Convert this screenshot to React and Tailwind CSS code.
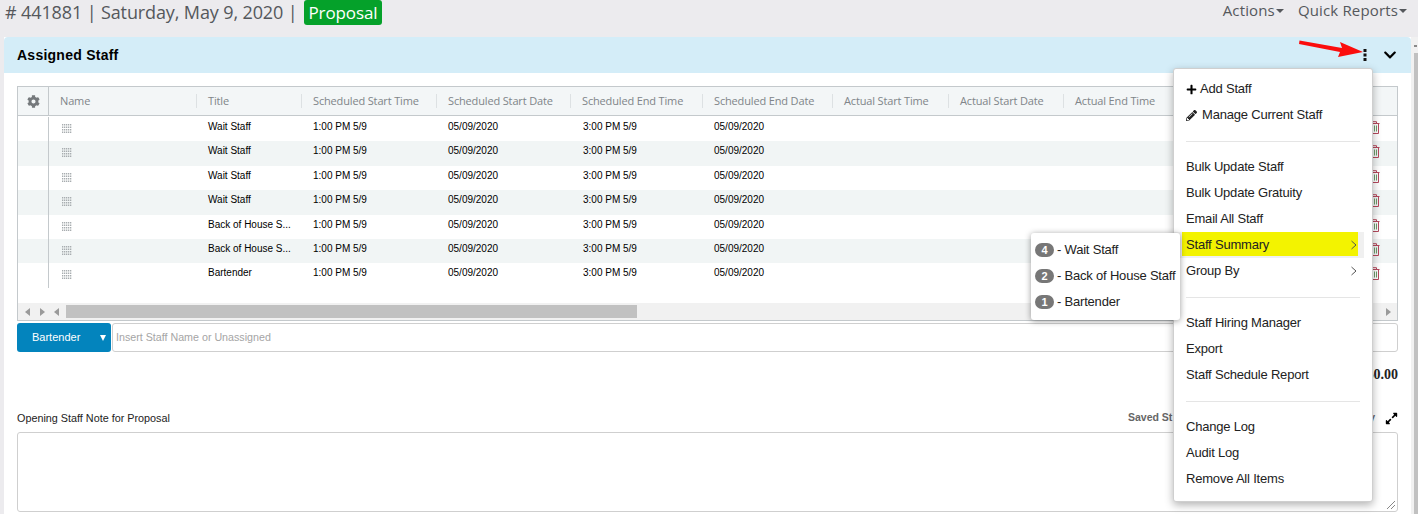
import React from "react";
import { FaCog, FaPlus, FaPencilAlt, FaExpandAlt, FaChevronDown } from "react-icons/fa";

const arial = "font-['Liberation_Sans',Arial,sans-serif]";
const open = "font-['Open_Sans',sans-serif]";

const columns = [
  ["Name", "w-[148px]"],
  ["Title", "w-[105px]"],
  ["Scheduled Start Time", "w-[135px]"],
  ["Scheduled Start Date", "w-[134px]"],
  ["Scheduled End Time", "w-[132px]"],
  ["Scheduled End Date", "w-[130px]"],
  ["Actual Start Time", "w-[116px]"],
  ["Actual Start Date", "w-[115px]"],
  ["Actual End Time", "w-[100px]"],
];

const rows = [
  "Wait Staff", "Wait Staff", "Wait Staff", "Wait Staff",
  "Back of House S...", "Back of House S...", "Bartender",
];

function Grip() {
  const dots = [];
  for (let y = 0; y < 4; y++) for (let x = 0; x < 5; x++) dots.push(<rect key={`${x}-${y}`} x={x * 2} y={y * 2.5} width="1.3" height="1.5" />);
  return <svg width="10" height="9" viewBox="0 0 10 9" fill="#a8adb0">{dots}</svg>;
}

function Trash() {
  return (
    <svg width="11" height="13" viewBox="0 0 11 13" fill="none" stroke="#b5485c" strokeWidth="1">
      <path d="M0.5 2.5H10.5M3.5 2.5V0.7H7.5V2.5" />
      <path d="M1.5 2.5V12.5H9.5V2.5" />
      <path d="M3.5 4.5V10.5M5.5 4.5V10.5M7.5 4.5V10.5" stroke="#6f9a6a" />
    </svg>
  );
}

function Row({ title, index }) {
  const striped = index % 2 === 1;
  return (
    <div className={`flex h-[24.4px] text-[10px] text-black ${arial} ${striped ? "bg-[#f1f5f5]" : "bg-white"}`}>
      <div className="w-[31px] shrink-0 border-r border-[#c4c9cc]" />
      <div className="w-[148px] shrink-0 pl-[13px] pt-[7px]"><Grip /></div>
      <div className="w-[105px] shrink-0 pl-[11px] pt-[2px]">{title}</div>
      <div className="w-[135px] shrink-0 pl-[11px] pt-[2px]">1:00 PM 5/9</div>
      <div className="w-[134px] shrink-0 pl-[11px] pt-[2px]">05/09/2020</div>
      <div className="w-[132px] shrink-0 pl-[12px] pt-[2px]">3:00 PM 5/9</div>
      <div className="w-[130px] shrink-0 pl-[11px] pt-[2px]">05/09/2020</div>
      <div className="flex flex-1 justify-end pr-[17px] pt-[4px]"><Trash /></div>
    </div>
  );
}

function Arrow({ dir, className = "" }) {
  const d = dir === "left" ? "M6 0V8L1 4Z" : "M1 0V8L6 4Z";
  return <svg width="7" height="8" viewBox="0 0 7 8" fill="#9a9a9a" className={className}><path d={d} /></svg>;
}

function MenuItem({ children, highlight, chevron }) {
  return (
    <div className={`relative mr-[8px] flex h-[26px] items-center pl-[12px] text-[13px] tracking-[-0.2px] text-[#222] ${highlight ? "bg-[#f0f0f0]" : ""}`}>
      {highlight && <div className="absolute bottom-[2px] left-[8px] top-0 w-[176px] bg-[#f3f300]" />}
      <span className="relative flex items-center">{children}</span>
      {chevron && (
        <svg width="6" height="10" viewBox="0 0 6 10" fill="none" stroke="#555" strokeWidth="1" className="absolute right-[7px] top-[8px]"><path d="M0.5 1L5 5L0.5 9" /></svg>
      )}
    </div>
  );
}

function Divider() {
  return <div className="mx-[12px] mb-[12px] mt-[13px] h-px bg-[#e5e5e5]" />;
}

function Badge({ n, label }) {
  return (
    <div className="flex h-[26px] items-center pl-[4px] text-[13px] tracking-[-0.2px] text-[#222]">
      <span className="mr-[3px] flex h-[14px] w-[19px] shrink-0 items-center justify-center rounded-full bg-[#777] text-[11px] font-bold tracking-normal text-white">{n}</span>
      <span className="whitespace-nowrap">- {label}</span>
    </div>
  );
}

export default function App() {
  return (
    <div className={`relative h-[514px] w-[1418px] overflow-hidden bg-[#ecebee] ${arial}`}>
      <header className="flex h-[37px] items-start justify-between pl-[5px] pr-[11px]">
        <div className={`flex items-center text-[18px] leading-[25px] tracking-[-0.12px] text-[#55585c] ${open}`}>
          <span># 441881 | Saturday, May 9, 2020 |</span>
          <span className="ml-[6px] rounded-[3px] bg-[#05a12a] px-[5px] text-[17px] text-white">Proposal</span>
        </div>
        <div className={`flex gap-[14px] text-[15px] leading-[20px] tracking-[0.15px] text-[#55585c] ${open}`}>
          <span className="flex items-center">Actions<span className="ml-[1px] mt-[2px] border-x-[4px] border-t-[4px] border-x-transparent border-t-[#55585c]" /></span>
          <span className="flex items-center">Quick Reports<span className="ml-[1px] mt-[2px] border-x-[4px] border-t-[4px] border-x-transparent border-t-[#55585c]" /></span>
        </div>
      </header>

      <div className="flex">
        <main className="ml-[4px] h-[477px] w-[1407px] bg-white">
          <div className="flex h-[36px] items-center justify-between rounded-t-[4px] bg-[#d4edf8] pl-[13px] pr-[14px]">
            <h2 className="text-[14px] font-bold tracking-[0.25px] text-black">Assigned Staff</h2>
            <div className="flex items-center gap-[16px]">
              <svg width="4" height="12" viewBox="0 0 4 12" fill="#111"><rect x="0.5" y="0" width="3" height="3" /><rect x="0.5" y="4.5" width="3" height="3" /><rect x="0.5" y="9" width="3" height="3" /></svg>
              <FaChevronDown className="text-[14px] text-black" />
            </div>
          </div>

          <div className="px-[13px] pt-[13px]">
            <div className="h-[235px] w-[1381px] overflow-hidden border border-[#c4c9cc]">
              <div className={`flex h-[29px] border-b border-[#c4c9cc] bg-[#f3f6f7] text-[11px] tracking-[-0.15px] text-[#808589] ${open}`}>
                <div className="flex w-[31px] shrink-0 items-center justify-center border-r border-[#c4c9cc]"><FaCog className="text-[13px] text-[#75797c]" /></div>
                {columns.map(([label, w], i) => (
                  <div key={label} className={`relative flex shrink-0 items-center whitespace-nowrap pl-[11px] ${w}`}>
                    {label}
                    {i < columns.length - 1 && <span className="absolute bottom-[7px] right-0 top-[7px] w-px bg-[#dde1e3]" />}
                  </div>
                ))}
              </div>
              <div className="h-[187px] pt-px">
                {rows.map((title, i) => <Row key={i} title={title} index={i} />)}
              </div>
              <div className="flex h-[17px] items-center bg-[#f1f1f1]">
                <div className="flex w-[48px] items-center justify-between px-[6px]">
                  <Arrow dir="left" />
                  <Arrow dir="right" />
                  <Arrow dir="left" />
                </div>
                <div className="h-[13px] w-[571px] bg-[#c1c1c1]" />
                <div className="flex flex-1 justify-end pr-[5px]"><Arrow dir="right" /></div>
              </div>
            </div>

            <div className="mt-[2px] flex h-[29px] gap-px">
              <div className="flex w-[94px] items-center justify-between rounded-[3px] bg-[#0384bd] pl-[15px] pr-[5px] text-[11px] text-white">
                <span>Bartender</span>
                <span className="border-x-[3.5px] border-t-[6px] border-x-transparent border-t-white" />
              </div>
              <div className="flex flex-1 items-center rounded-[3px] border border-[#cfcfcf] bg-white pl-[3px] text-[10.7px] text-[#a5a5a5]">Insert Staff Name or Unassigned</div>
            </div>

            <div className="mt-[12px] flex h-[18px] justify-end text-[14px] font-bold text-[#222] font-['Liberation_Serif',serif]">$0.00</div>

            <div className="mt-[28px] flex h-[16px] items-center justify-between text-[10.8px] text-[#222]">
              <span>Opening Staff Note for Proposal</span>
              <div className="flex items-center">
                <span className="mr-[10px] flex w-[247px] justify-between text-[10.5px] font-bold text-[#666]"><span>Saved St</span><span>y</span></span>
                <FaExpandAlt className="text-[13px] text-black" />
              </div>
            </div>
            <div className="relative mt-[6px] h-[80px] rounded-[3px] border border-[#cfcfcf] bg-white">
              <svg width="10" height="10" viewBox="0 0 10 10" stroke="#888" strokeWidth="1" className="absolute bottom-px right-px"><path d="M9 1L1 9M9 5L5 9" /></svg>
            </div>
          </div>
        </main>
        <aside className="flex h-[477px] w-[7px] flex-col items-end bg-[#f1f1f1]">
          <span className="mr-[1px] mt-[8px] h-[2px] w-[3px] bg-[#8a8a8a]" />
          <span className="mt-[6px] h-[461px] w-[4px] bg-[#c1c1c1]" />
        </aside>
      </div>

      {/* red annotation arrow */}
      <svg width="66" height="22" viewBox="0 0 66 22" className="absolute left-[1299px] top-[38px]">
        <path d="M0.5 2.5L43 10L41 4L64 14L39 19L41 14L0 6Z" fill="#fb0d0d" />
      </svg>

      {/* actions dropdown */}
      <div className="absolute left-[1173px] top-[68px] h-[434px] w-[200px] rounded-[3px] border border-[#cfcfcf] bg-white pt-[7px] shadow-[0_3px_8px_rgba(0,0,0,0.3)]">
        <MenuItem><FaPlus className="mr-[3px] text-[11px] text-black" />Add Staff</MenuItem>
        <MenuItem><FaPencilAlt className="mr-[5px] text-[11px] text-[#222]" />Manage Current Staff</MenuItem>
        <Divider />
        <MenuItem>Bulk Update Staff</MenuItem>
        <MenuItem>Bulk Update Gratuity</MenuItem>
        <MenuItem>Email All Staff</MenuItem>
        <MenuItem highlight chevron>Staff Summary</MenuItem>
        <MenuItem chevron>Group By</MenuItem>
        <Divider />
        <MenuItem>Staff Hiring Manager</MenuItem>
        <MenuItem>Export</MenuItem>
        <MenuItem>Staff Schedule Report</MenuItem>
        <Divider />
        <MenuItem>Change Log</MenuItem>
        <MenuItem>Audit Log</MenuItem>
        <MenuItem>Remove All Items</MenuItem>
      </div>

      {/* staff summary submenu */}
      <div className="absolute left-[1031px] top-[233px] h-[87px] w-[149px] rounded-[3px] bg-white pt-[4px] shadow-[0_1px_6px_rgba(0,0,0,0.4)]">
        <Badge n="4" label="Wait Staff" />
        <Badge n="2" label="Back of House Staff" />
        <Badge n="1" label="Bartender" />
      </div>
    </div>
  );
}
